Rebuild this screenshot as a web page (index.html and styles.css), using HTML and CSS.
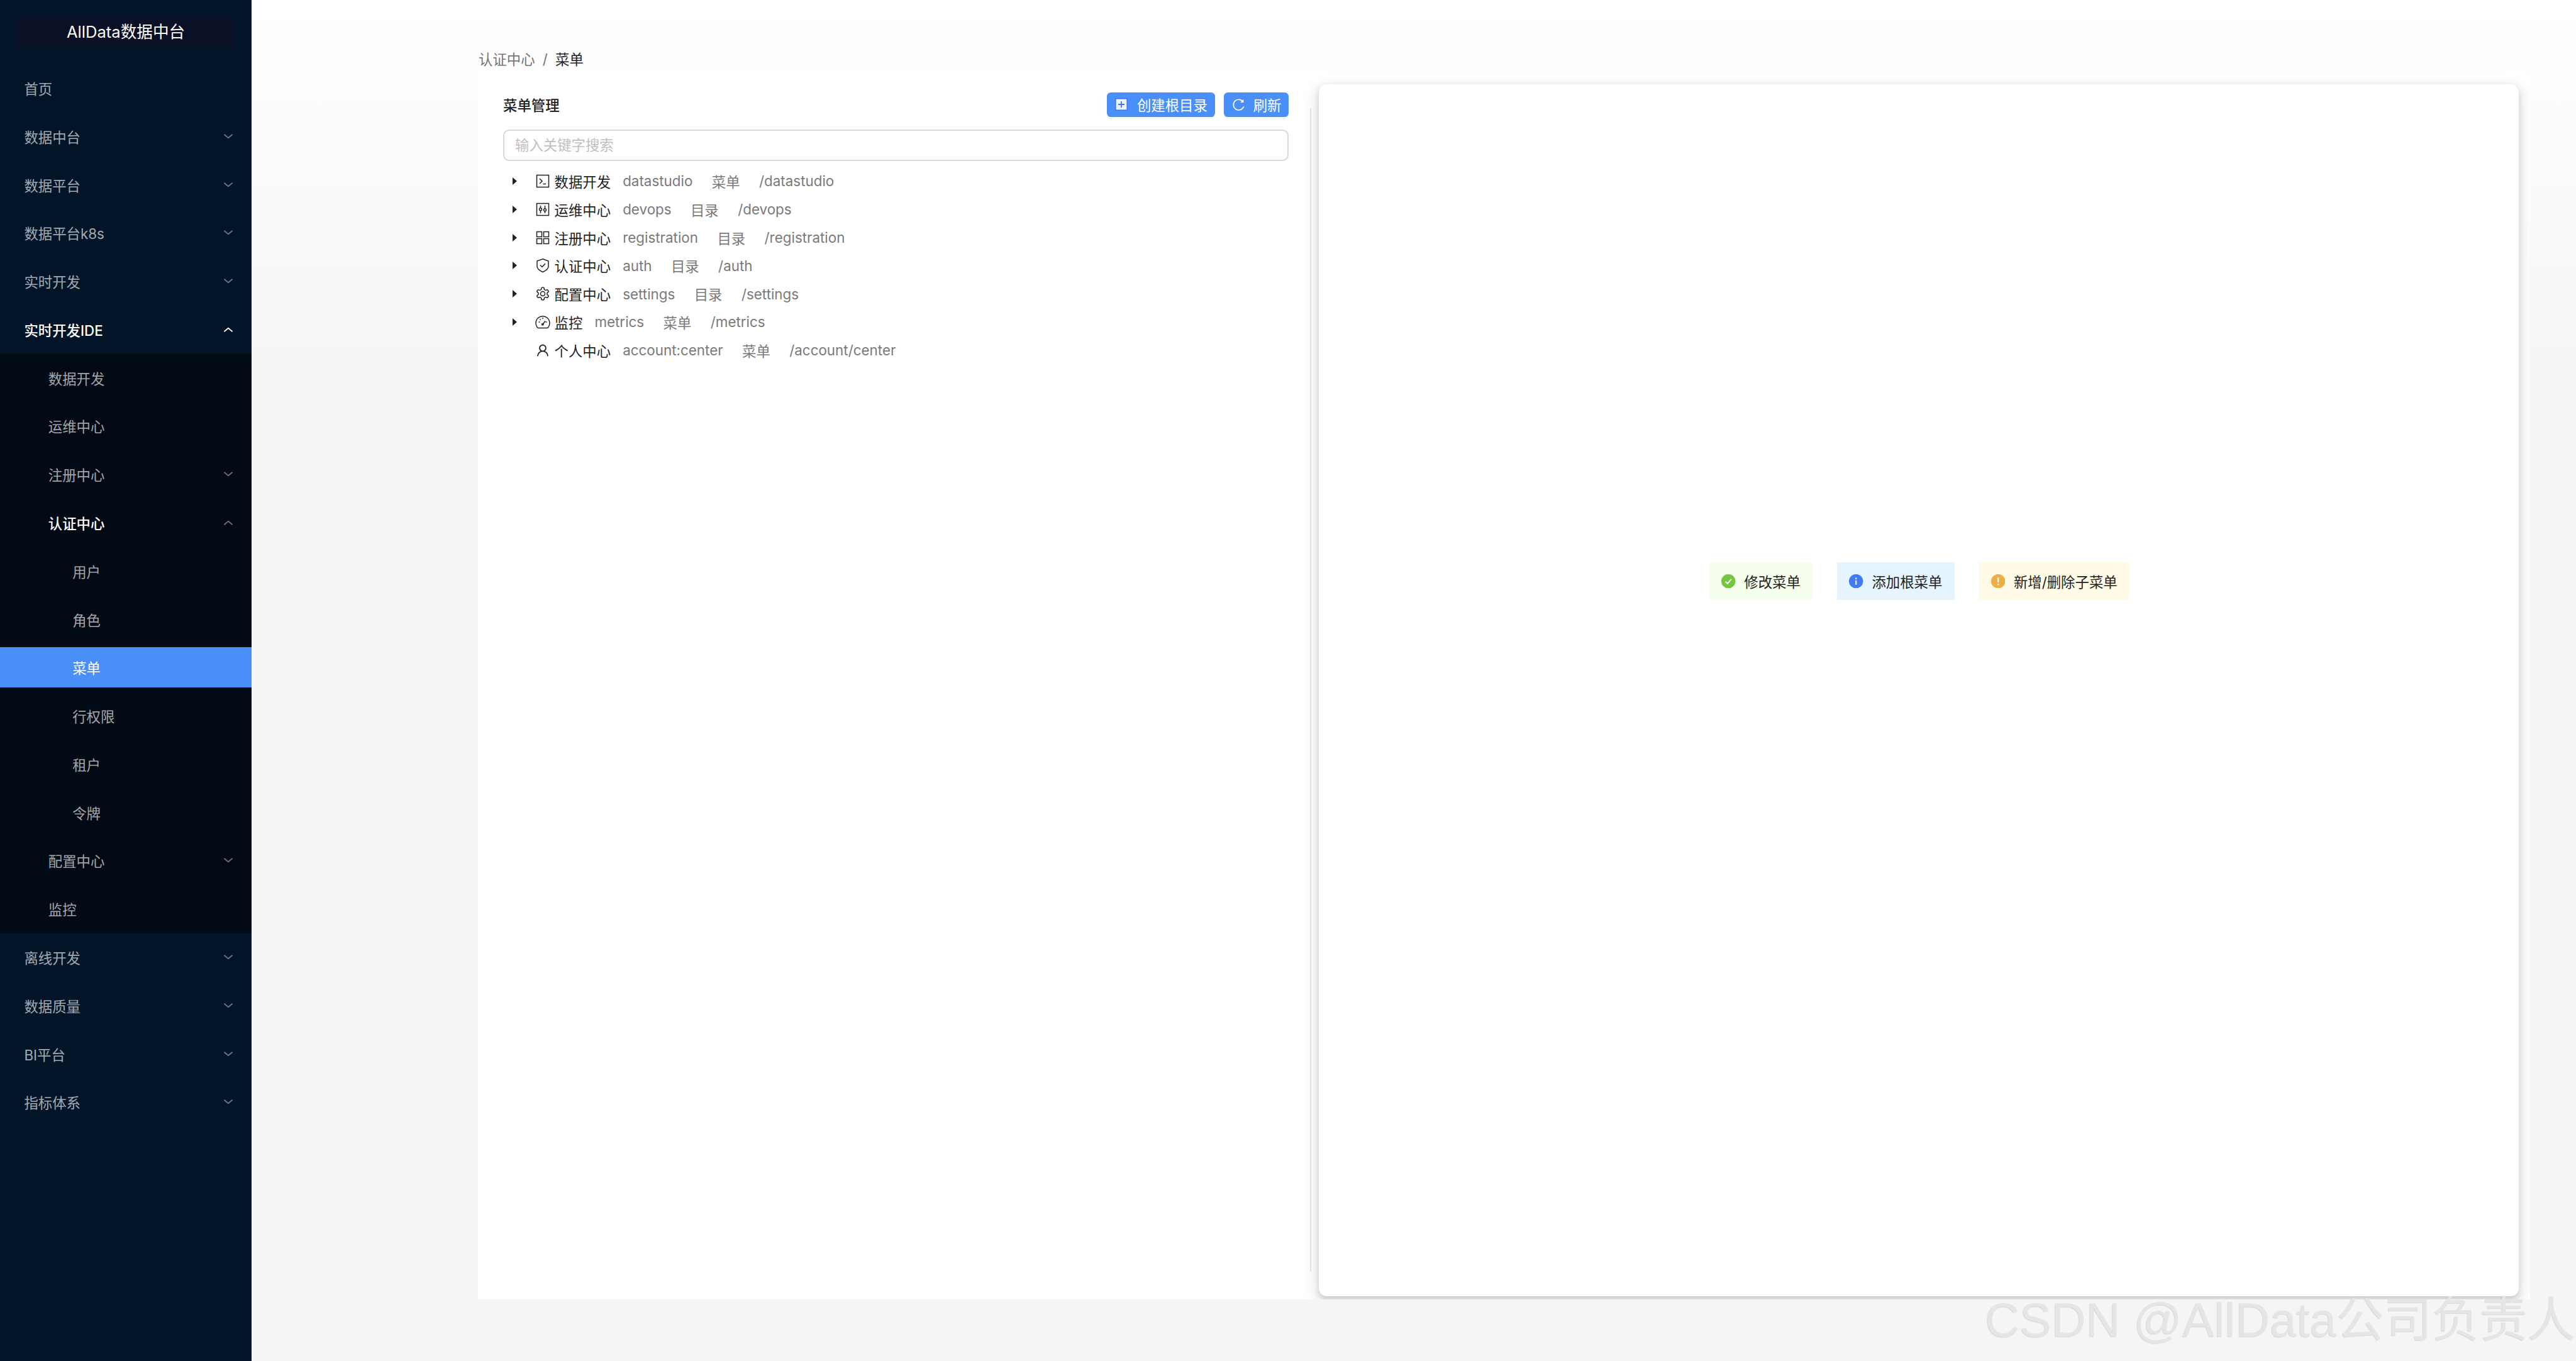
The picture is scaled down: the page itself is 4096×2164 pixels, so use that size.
FILE: index.html
```html
<!DOCTYPE html>
<html lang="zh-CN">
<head>
<meta charset="utf-8">
<title>菜单</title>
<link rel="stylesheet" href="styles.css">
</head>
<body>
<svg class="defs" aria-hidden="true">
  <symbol id="down" viewBox="0 0 14 8"><path d="M1 1.2 7 6.2 13 1.2" fill="none" stroke="currentColor" stroke-width="1.8" stroke-linecap="round" stroke-linejoin="round"/></symbol>
  <symbol id="up" viewBox="0 0 14 8"><path d="M1 6.8 7 1.8 13 6.8" fill="none" stroke="currentColor" stroke-width="1.8" stroke-linecap="round" stroke-linejoin="round"/></symbol>
</svg>
<aside class="sider">
  <div class="logo">AllData数据中台</div>
  <nav class="menu">
    <div class="item lv1">首页</div>
    <div class="item lv1">数据中台<svg class="arrow"><use href="#down"/></svg></div>
    <div class="item lv1">数据平台<svg class="arrow"><use href="#down"/></svg></div>
    <div class="item lv1">数据平台k8s<svg class="arrow"><use href="#down"/></svg></div>
    <div class="item lv1">实时开发<svg class="arrow"><use href="#down"/></svg></div>
    <div class="item lv1 open">实时开发IDE<svg class="arrow"><use href="#up"/></svg></div>
    <div class="sub">
      <div class="item lv2">数据开发</div>
      <div class="item lv2">运维中心</div>
      <div class="item lv2">注册中心<svg class="arrow"><use href="#down"/></svg></div>
      <div class="item lv2 open-text">认证中心<svg class="arrow"><use href="#up"/></svg></div>
      <div class="item lv3">用户</div>
      <div class="item lv3">角色</div>
      <div class="item lv3 selected">菜单</div>
      <div class="item lv3">行权限</div>
      <div class="item lv3">租户</div>
      <div class="item lv3">令牌</div>
      <div class="item lv2">配置中心<svg class="arrow"><use href="#down"/></svg></div>
      <div class="item lv2">监控</div>
    </div>
    <div class="item lv1">离线开发<svg class="arrow"><use href="#down"/></svg></div>
    <div class="item lv1">数据质量<svg class="arrow"><use href="#down"/></svg></div>
    <div class="item lv1">BI平台<svg class="arrow"><use href="#down"/></svg></div>
    <div class="item lv1">指标体系<svg class="arrow"><use href="#down"/></svg></div>
  </nav>
</aside>
<main class="main">
  <div class="crumbs"><span>认证中心</span><span class="sep">/</span><span class="current">菜单</span></div>
  <div class="panel">
    <section class="left">
      <div class="head">
        <h2 class="title">菜单管理</h2>
        <div class="actions">
          <button class="btn"><svg class="plus" viewBox="0 0 20 20"><rect x="0.8" y="0.8" width="18.4" height="18.4" fill="#eaf3fd" stroke="#3f73f4" stroke-width="1.6"/><path d="M10 5v10M5 10h10" stroke="#3f73f4" stroke-width="1.8"/></svg>创建根目录</button>
          <button class="btn"><svg class="reload" viewBox="0 0 20 20"><path d="M16.6 5.4A8 8 0 1 0 17.6 13" fill="none" stroke="#fff" stroke-width="1.5" stroke-linecap="round"/><path d="M17.4 1.8V6.6H12.6Z" fill="#fff"/></svg>刷新</button>
        </div>
      </div>
      <input class="search" type="text" placeholder="输入关键字搜索">
      <ul class="tree">
        <li class="row"><i class="caret"></i><svg class="ico" viewBox="0 0 24 24"><rect x="2.5" y="2.5" width="19" height="19"/><path d="M7 8l4 4-4 4M12.5 16.5H17"/></svg><b class="name">数据开发</b><span class="meta">datastudio</span><span class="meta">菜单</span><span class="meta">/datastudio</span></li>
        <li class="row"><i class="caret"></i><svg class="ico" viewBox="0 0 24 24"><rect x="2.5" y="2.5" width="19" height="19"/><path d="M8.5 6v3.5M8.5 14v4M15.5 6v4.5M15.5 15v3"/><circle cx="8.5" cy="11.8" r="2"/><circle cx="15.5" cy="12.8" r="2"/></svg><b class="name">运维中心</b><span class="meta">devops</span><span class="meta">目录</span><span class="meta">/devops</span></li>
        <li class="row"><i class="caret"></i><svg class="ico" viewBox="0 0 24 24"><rect x="2.5" y="2.5" width="8" height="8"/><rect x="13.5" y="2.5" width="8" height="8"/><rect x="2.5" y="13.5" width="8" height="8"/><rect x="13.5" y="13.5" width="8" height="8"/></svg><b class="name">注册中心</b><span class="meta">registration</span><span class="meta">目录</span><span class="meta">/registration</span></li>
        <li class="row"><i class="caret"></i><svg class="ico" viewBox="0 0 24 24"><path d="M12 1.8 21 5v8.5c0 4-4.5 7-9 9-4.5-2-9-5-9-9V5Z"/><path d="M8 11.5l3 3 5-5.5"/></svg><b class="name">认证中心</b><span class="meta">auth</span><span class="meta">目录</span><span class="meta">/auth</span></li>
        <li class="row"><i class="caret"></i><svg class="ico" viewBox="0 0 24 24"><path d="M12.22 2h-.44a2 2 0 0 0-2 2v.18a2 2 0 0 1-1 1.73l-.43.25a2 2 0 0 1-2 0l-.15-.08a2 2 0 0 0-2.73.73l-.22.38a2 2 0 0 0 .73 2.73l.15.1a2 2 0 0 1 1 1.72v.51a2 2 0 0 1-1 1.74l-.15.09a2 2 0 0 0-.73 2.73l.22.38a2 2 0 0 0 2.73.73l.15-.08a2 2 0 0 1 2 0l.43.25a2 2 0 0 1 1 1.73V20a2 2 0 0 0 2 2h.44a2 2 0 0 0 2-2v-.18a2 2 0 0 1 1-1.73l.43-.25a2 2 0 0 1 2 0l.15.08a2 2 0 0 0 2.73-.73l.22-.39a2 2 0 0 0-.73-2.73l-.15-.08a2 2 0 0 1-1-1.74v-.5a2 2 0 0 1 1-1.74l.15-.09a2 2 0 0 0 .73-2.73l-.22-.38a2 2 0 0 0-2.73-.73l-.15.08a2 2 0 0 1-2 0l-.43-.25a2 2 0 0 1-1-1.73V4a2 2 0 0 0-2-2z"/><circle cx="12" cy="12" r="3.5"/></svg><b class="name">配置中心</b><span class="meta">settings</span><span class="meta">目录</span><span class="meta">/settings</span></li>
        <li class="row"><i class="caret"></i><svg class="ico" viewBox="0 0 24 24"><path d="M5.2 21.5h13.6c1 0 1.600-.4 2.100-1.300a11 11 0 1 0-17.800 0c.5.900 1.100 1.300 2.100 1.300Z"/><path d="M12 5v2M5.500 12h2M16.500 12h2M7.500 7.500l1.300 1.300M12 15.500l4-5"/><circle cx="11.800" cy="15.800" r="1.200"/></svg><b class="name">监控</b><span class="meta">metrics</span><span class="meta">菜单</span><span class="meta">/metrics</span></li>
        <li class="row"><i class="caret leaf"></i><svg class="ico user" viewBox="0 0 1024 1024"><path d="M858.5 763.6a374 374 0 0 0-80.6-119.5 375.63 375.63 0 0 0-119.5-80.6c-.4-.2-.8-.3-1.2-.5C719.5 518 760 444.7 760 362c0-137-111-248-248-248S264 225 264 362c0 82.7 40.5 156 102.8 201.1-.4.2-.8.3-1.2.5-44.8 18.9-85 46-119.5 80.6a375.63 375.63 0 0 0-80.6 119.5A371.7 371.7 0 0 0 136 901.8a8 8 0 0 0 8 8.2h60c4.4 0 7.9-3.5 8-7.8 2-77.2 33-149.5 87.8-204.3 56.7-56.7 132-87.9 212.2-87.9s155.5 31.2 212.2 87.9C779 752.7 810 825 812 902.2c.1 4.4 3.6 7.8 8 7.8h60a8 8 0 0 0 8-8.2c-1-47.8-10.9-94.3-29.5-138.2zM512 534c-45.9 0-89.1-17.9-121.6-50.4S340 407.9 340 362c0-45.9 17.9-89.1 50.4-121.6S466.1 190 512 190s89.1 17.9 121.6 50.4S684 316.1 684 362c0 45.9-17.9 89.1-50.4 121.6S557.9 534 512 534z"/></svg><b class="name">个人中心</b><span class="meta">account:center</span><span class="meta">菜单</span><span class="meta">/account/center</span></li>
      </ul>
    </section>
    <div class="divider"></div>
    <section class="card">
      <div class="alert success"><svg class="alert-ico" viewBox="0 0 24 24"><circle cx="12" cy="12" r="12" fill="#74c63e"/><path d="M7 12.5l3.5 3.5L17 8.5" fill="none" stroke="#fff" stroke-width="2"/></svg>修改菜单</div>
      <div class="alert info"><svg class="alert-ico" viewBox="0 0 24 24"><circle cx="12" cy="12" r="12" fill="#3f7bf7"/><path d="M12 10.5V18M12 6v2.5" fill="none" stroke="#fff" stroke-width="2.2"/></svg>添加根菜单</div>
      <div class="alert warn"><svg class="alert-ico" viewBox="0 0 24 24"><circle cx="12" cy="12" r="12" fill="#edaf43"/><path d="M12 5.5V14M12 16v2.500" fill="none" stroke="#fff" stroke-width="2.400"/></svg>新增/删除子菜单</div>
    </section>
  </div>
</main>
<div class="watermark">CSDN @AllData公司负责人</div>
</body>
</html>
```
FILE: styles.css
```css
* { box-sizing: border-box; }
html, body { margin: 0; padding: 0; }
body {
  position: relative;
  display: flex;
  width: 4096px;
  height: 2164px;
  overflow: hidden;
  font-family: Inter, "Noto Sans CJK SC", sans-serif;
  font-size: 22.4px;
  color: #222;
}
.defs { position: absolute; width: 0; height: 0; }

/* sidebar */
.sider { flex: 0 0 400px; background: #021528; color: rgba(255,255,255,.65); }
.logo {
  margin: 27px 25px 0;
  height: 48px;
  background: #0a1126;
  color: #fff;
  font-size: 25.6px;
  line-height: 48px;
  text-align: center;
}
.menu { display: flex; flex-direction: column; margin-top: 26.6px; }
.sub { display: flex; flex-direction: column; background: #020a16; }
.item {
  display: flex;
  align-items: center;
  justify-content: space-between;
  height: 64px;
  margin: 6.4px 0;
  padding-right: 30px;
  flex: none;
}
.lv1 { padding-left: 38.4px; }
.lv2 { padding-left: 76.8px; }
.lv3 { padding-left: 115.2px; }
.arrow { width: 14px; height: 8px; color: rgba(255,255,255,.42); }
.open, .open-text { color: #fff; font-weight: 500; }
.open .arrow { color: #fff; }
.selected { background: #4a8ff8; color: #fff; }

/* main */
.main {
  flex: 1;
  padding: 80px 73px 0 360px;
  background: linear-gradient(#fff, #f5f5f5 28%);
}
.crumbs { display: flex; align-items: center; height: 26px; padding-left: 1px; color: #757575; }
.sep { margin: 0 12.2px; }
.current { color: #222; }
.panel {
  display: flex;
  height: 1951.2px;
  margin-top: 8.4px;
  background: #fff;
  overflow: hidden;
}

.left { flex: 0 0 1323px; padding: 32.8px 33.6px 0 40px; }
.head { display: flex; align-items: center; justify-content: space-between; height: 38.4px; }
.title { margin: 0; font-size: 22.4px; font-weight: 500; }
.actions { display: flex; gap: 14px; }
.btn {
  display: flex;
  align-items: center;
  gap: 15px;
  height: 38.4px;
  padding: 0 12px 0 13.2px;
  border: 0;
  border-radius: 6.4px;
  background: #4a8ff8;
  box-shadow: 0 3.2px 0 rgba(5,145,255,.06);
  color: #fff;
  font-family: inherit;
  font-size: 22.4px;
}
.plus { width: 20px; height: 20px; }
.reload { width: 21px; height: 21px; margin-right: -2.4px; }
.search {
  display: block;
  width: 100%;
  height: 50px;
  margin-top: 20px;
  padding: 0 17px;
  border: 2px solid #d9d9d9;
  border-radius: 9.6px;
  outline: 0;
  font-family: inherit;
  font-size: 22.4px;
}
.search::placeholder { color: #bfbfbf; }

.tree { margin: 10px 0 0; padding: 0; list-style: none; }
.row { display: flex; align-items: center; height: 44.8px; white-space: nowrap; }
.caret {
  width: 0;
  height: 0;
  margin-left: 15px;
  margin-right: 28.6px;
  border-left: 7px solid #222;
  border-top: 6px solid transparent;
  border-bottom: 6px solid transparent;
}
.leaf { visibility: hidden; }
.ico { width: 24px; height: 24px; fill: none; stroke: #222; stroke-width: 1.5; flex: none; }
.user { fill: #222; stroke: none; }
.name { margin-left: 7px; font-weight: 400; }
.meta { margin-left: 30.4px; color: #7a7a7a; }
.name + .meta { margin-left: 19px; }

.divider { flex: 0 0 1.6px; height: 1850px; margin-top: 57.6px; background: #e6e6e6; }
.card {
  display: flex;
  justify-content: center;
  align-items: flex-start;
  gap: 39.2px;
  flex: 0 0 1908px;
  height: 1926.4px;
  margin: 20px 0 0 12.4px;
  padding: 759.2px 0 0 2px;
  border-radius: 12.8px;
  background: #fff;
  box-shadow: 0 1.6px 3.2px -3.2px rgba(0,0,0,.16), 0 4.8px 9.6px 0 rgba(0,0,0,.12), 0 8px 19.2px 6.4px rgba(0,0,0,.09);
}
.alert { display: flex; align-items: center; gap: 13.6px; height: 60.8px; padding: 0 19.2px; }
.alert-ico { width: 22.4px; height: 22.4px; }
.success { background: #f6ffed; }
.info { background: #e6f4ff; }
.warn { background: #fffbe6; }

.watermark {
  position: absolute;
  right: 1px;
  bottom: 23.5px;
  font-family: "Liberation Sans", "Noto Sans CJK SC", sans-serif;
  font-size: 76px;
  line-height: 1.1;
  white-space: nowrap;
  color: #e5e5e5;
  text-shadow: -1px 0.5px 1px rgba(0,0,0,.12);
}
```
